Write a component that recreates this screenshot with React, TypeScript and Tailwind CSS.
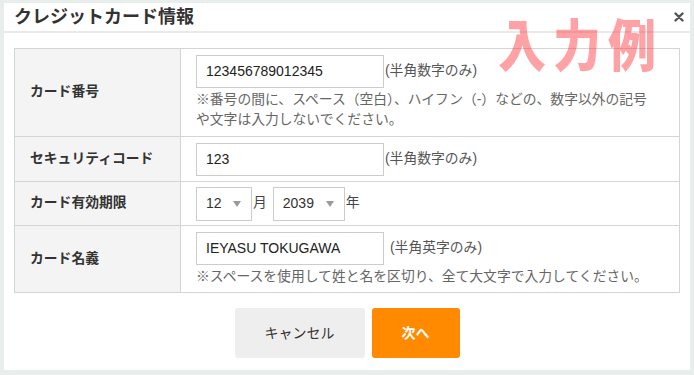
import React from 'react';

const jp = "font-['Liberation_Sans','Noto_Sans_CJK_JP',sans-serif]";

const Caret = () => (
  <svg width="8" height="6" viewBox="0 0 8 6" className="shrink-0">
    <path d="M0 0 L8 0 L4 6 Z" fill="#9a9a9a" />
  </svg>
);

const Select = ({ value, w }: { value: string; w: string }) => (
  <div className={`${w} h-[34px] border border-[#cccccc] bg-white flex items-center justify-between pl-[9px] pr-[10px] text-[14px] text-[#333]`}>
    <span>{value}</span>
    <Caret />
  </div>
);

const Input = ({ value }: { value: string }) => (
  <div className="w-[188px] h-[33px] border border-[#cccccc] bg-white flex items-center px-[9px] text-[14px] text-[#222]">
    {value}
  </div>
);

export default function App() {
  return (
    <div className={`w-[694px] h-[375px] bg-[#e8eeec] pt-[3px] pl-[4px] pr-[4px] ${jp}`}>
      <div className="relative bg-white h-[367px] flex flex-col">
        {/* Header */}
        <div className="h-[30px] flex items-center justify-between pl-[10px] pr-[6px] border-b-2 border-[#e9e9e9] shrink-0">
          <h1 className="text-[18px] font-bold text-[#333]">クレジットカード情報</h1>
          <svg width="10" height="10" viewBox="0 0 10 10">
            <path d="M1.5 1.5 L8.5 8.5 M8.5 1.5 L1.5 8.5" stroke="#555" strokeWidth="2.4" strokeLinecap="round" />
          </svg>
        </div>

        {/* Watermark */}
        <div className="absolute left-[494px] top-[8px] text-[48px] leading-[64px] font-black text-[rgba(255,60,70,0.48)] tracking-[7px] scale-y-[1.15] origin-top pointer-events-none select-none">
          入力例
        </div>

        {/* Form table */}
        <div className="px-[10px] pt-[15px]">
          <table className="w-full border-collapse border border-[#d4d4d4] text-[13.8px]">
            <tbody>
              <tr className="h-[87px]">
                <th className="w-[166px] bg-[#f4f4f4] border border-[#d4d4d4] text-left pl-[15px] font-bold text-[#333]">カード番号</th>
                <td className="border border-[#d4d4d4] pl-[15px] pt-[6px] pb-[6px] align-top">
                  <div className="flex items-center">
                    <Input value="123456789012345" />
                    <span className="text-[#555] ml-px">(半角数字のみ)</span>
                  </div>
                  <p className="text-[#666] leading-[20px] mt-[2px] pr-[22px]">※番号の間に、スペース（空白）、ハイフン（-）などの、数字以外の記号や文字は入力しないでください。</p>
                </td>
              </tr>
              <tr className="h-[45px]">
                <th className="bg-[#f4f4f4] border border-[#d4d4d4] text-left pl-[15px] font-bold text-[#333]">セキュリティコード</th>
                <td className="border border-[#d4d4d4] pl-[15px]">
                  <div className="flex items-center">
                    <Input value="123" />
                    <span className="text-[#555] ml-px">(半角数字のみ)</span>
                  </div>
                </td>
              </tr>
              <tr className="h-[44px]">
                <th className="bg-[#f4f4f4] border border-[#d4d4d4] text-left pl-[15px] font-bold text-[#333]">カード有効期限</th>
                <td className="border border-[#d4d4d4] pl-[15px]">
                  <div className="flex items-center text-[#444]">
                    <Select value="12" w="w-[56px]" />
                    <span className="ml-[1px] mr-[6px]">月</span>
                    <Select value="2039" w="w-[72px]" />
                    <span className="ml-[1px]">年</span>
                  </div>
                </td>
              </tr>
              <tr className="h-[67px]">
                <th className="bg-[#f4f4f4] border border-[#d4d4d4] text-left pl-[15px] font-bold text-[#333]">カード名義</th>
                <td className="border border-[#d4d4d4] pl-[15px] pt-[6px] align-top">
                  <div className="flex items-center">
                    <Input value="IEYASU TOKUGAWA" />
                    <span className="text-[#555] ml-[6px]">(半角英字のみ)</span>
                  </div>
                  <p className="text-[#666] leading-[20px] mt-[2px]">※スペースを使用して姓と名を区切り、全て大文字で入力してください。</p>
                </td>
              </tr>
            </tbody>
          </table>
        </div>

        {/* Buttons */}
        <div className="flex justify-center gap-[7px] mt-[15px]">
          <button className="w-[130px] h-[50px] rounded-[3px] bg-[#eeeeee] text-[14px] text-[#333]">キャンセル</button>
          <button className="w-[88px] h-[50px] rounded-[3px] bg-[#ff8a00] text-[14px] text-white font-bold">次へ</button>
        </div>
      </div>
    </div>
  );
}
